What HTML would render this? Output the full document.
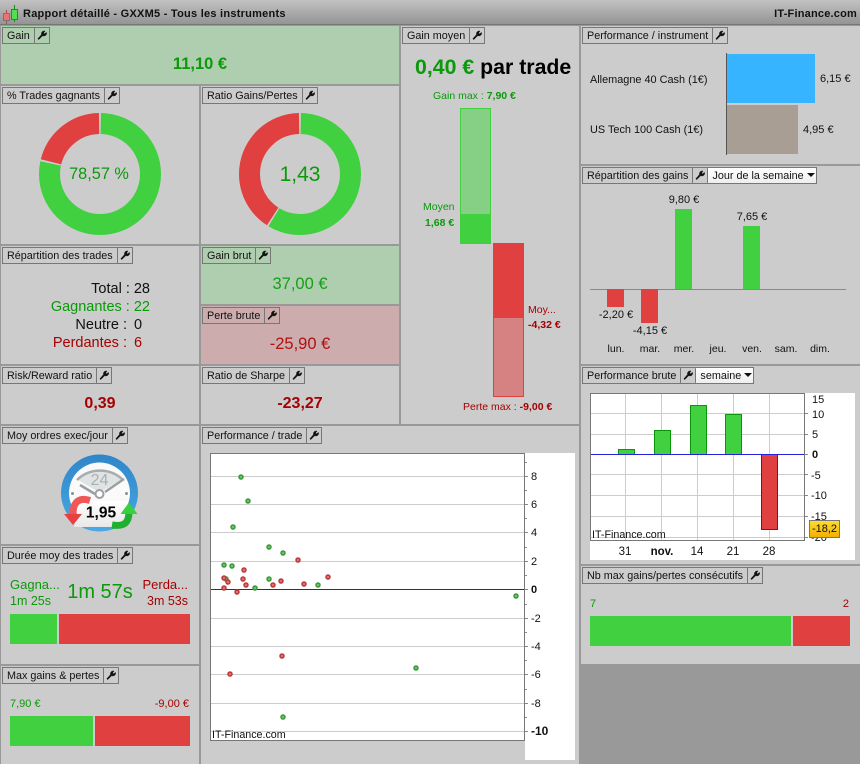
<!DOCTYPE html>
<html lang="fr"><head><meta charset="utf-8"><title>Rapport détaillé</title>
<style>
html,body{margin:0;padding:0}
body{width:860px;height:764px;position:relative;overflow:hidden;background:#999;font-family:"Liberation Sans",Arial,sans-serif;font-size:12px;color:#111}
.p{position:absolute;background:#ccc}
.g{background:#afcdaf}
.r{background:#ccacac}
.a{position:absolute;white-space:nowrap}
.c{text-align:center}
.l{position:absolute;left:1px;top:1px;height:15px;border:1px solid #777;line-height:17px;white-space:nowrap;display:flex;font-size:10.800px}
.l b{font-weight:normal;padding:0 4px 0 4px;border-right:1px solid #777;display:block}
.l i{display:block;width:14px;height:15px;position:relative}
.l i svg{position:absolute;left:2px;top:2px}
.l u{text-decoration:none;display:block;background:linear-gradient(#fff,#eee);padding:0 1px 0 4px;border-left:1px solid #777;border-radius:1px}
.tri{display:inline-block;width:0;height:0;border:4px solid transparent;border-top-color:#111;border-bottom:0;margin-left:3px;vertical-align:2px}
.gt{color:#0a9a0a}.rt{color:#a60000}
svg{display:block}
</style></head><body>
<svg width="0" height="0" style="position:absolute"><defs><path id="w" d="M1 10.500 2 11.500 6.800 6.800C8.600 7.600 10.600 6.800 11.300 5.200 11.600 4.400 11.600 3.600 11.300 2.900L9.300 4.700 7.800 3.600 9.600 1.300C8.400 .9 6.800 1.300 6 2.400 5.300 3.300 5.200 4.500 5.500 5.400Z" fill="#111" stroke="#111" stroke-width=".6"/></defs></svg>

<!-- title bar -->
<div class="a" style="left:0;top:0;width:860px;height:24px;background:linear-gradient(#c2c2c2,#949494);border-bottom:1px solid #777"></div>
<svg class="a" style="left:2px;top:4px" width="18" height="20"><path d="M4.500 6v14" stroke="#a05050" stroke-width="1"/><path d="M12.500 1v17" stroke="#1a8a1a" stroke-width="1"/><rect x="1.500" y="9.500" width="6" height="7" fill="#f07070" stroke="#777"/><rect x="9.500" y="5.500" width="6" height="10" fill="#50e050" stroke="#2a8a2a"/></svg>
<div class="a" style="left:23px;top:7px;font-weight:bold;font-size:11px;letter-spacing:.25px;line-height:14px;color:#111">Rapport détaillé - GXXM5 - Tous les instruments</div>
<div class="a" style="right:3px;top:7px;font-weight:bold;font-size:11px;letter-spacing:.2px;line-height:14px;color:#111">IT-Finance.com</div>

<!-- Gain -->
<div class="p g" style="left:1px;top:26px;width:398px;height:58px"><div class="l"><b>Gain</b><i><svg width="10" height="10" viewBox="0 0 12 12"><use href="#w"/></svg></i></div></div>
<div class="a c gt" style="left:1px;top:54px;width:398px;font-size:16.500px;font-weight:bold;line-height:20px">11,10 €</div>

<!-- % trades -->
<div class="p" style="left:1px;top:86px;width:198px;height:158px"><div class="l"><b>% Trades gagnants</b><i><svg width="10" height="10" viewBox="0 0 12 12"><use href="#w"/></svg></i></div></div>
<svg class="a" style="left:39px;top:113px" width="122" height="122"><g transform="rotate(-90 61 61)" fill="none" stroke-width="21"><circle cx="61" cy="61" r="50.500" stroke="#40d040" pathLength="100" stroke-dasharray="78.100 21.900" stroke-dashoffset="-0.250"/><circle cx="61" cy="61" r="50.500" stroke="#e04040" pathLength="100" stroke-dasharray="20.800 79.200" stroke-dashoffset="-78.900"/></g></svg>
<div class="a c gt" style="left:38px;top:164px;width:122px;font-size:16.300px;line-height:20px">78,57 %</div>

<!-- ratio -->
<div class="p" style="left:201px;top:86px;width:198px;height:158px"><div class="l"><b>Ratio Gains/Pertes</b><i><svg width="10" height="10" viewBox="0 0 12 12"><use href="#w"/></svg></i></div></div>
<svg class="a" style="left:239px;top:113px" width="122" height="122"><g transform="rotate(-90 61 61)" fill="none" stroke-width="21"><circle cx="61" cy="61" r="50.500" stroke="#40d040" pathLength="100" stroke-dasharray="58.400 41.600" stroke-dashoffset="-0.250"/><circle cx="61" cy="61" r="50.500" stroke="#e04040" pathLength="100" stroke-dasharray="40.600 59.400" stroke-dashoffset="-59.100"/></g></svg>
<div class="a c gt" style="left:239px;top:162px;width:122px;font-size:21px;line-height:26px">1,43</div>

<!-- Gain moyen -->
<div class="p" style="left:401px;top:26px;width:178px;height:398px"><div class="l"><b>Gain moyen</b><i><svg width="10" height="10" viewBox="0 0 12 12"><use href="#w"/></svg></i></div></div>
<div class="a" style="left:415px;top:53px;font-size:21.300px;font-weight:bold;line-height:28px"><span class="gt">0,40 €</span> <span style="color:#000">par trade</span></div>
<div class="a gt" style="left:433px;top:89px;font-size:10.500px;line-height:14px">Gain max : <b>7,90 €</b></div>
<div class="a" style="left:460px;top:108px;width:31px;height:106px;box-sizing:border-box;background:#85d085;border:1px solid #40d040;border-bottom:0"></div>
<div class="a" style="left:460px;top:214px;width:31px;height:30px;background:#40d040"></div>
<div class="a" style="left:493px;top:243px;width:31px;height:75px;background:#e04040"></div>
<div class="a" style="left:493px;top:318px;width:31px;height:79px;box-sizing:border-box;background:#d68282;border:1px solid #e04040;border-top:0"></div>
<div class="a gt" style="left:423px;top:200px;font-size:10.500px;line-height:14px">Moyen</div>
<div class="a gt" style="left:425px;top:216px;font-size:10.500px;font-weight:bold;line-height:14px">1,68 €</div>
<div class="a rt" style="left:528px;top:303px;font-size:10.500px;line-height:14px">Moy...</div>
<div class="a rt" style="left:528px;top:318px;font-size:10.500px;font-weight:bold;line-height:14px">-4,32 €</div>
<div class="a rt" style="left:463px;top:400px;font-size:10.500px;line-height:14px">Perte max : <b>-9,00 €</b></div>

<!-- Perf / instrument -->
<div class="p" style="left:581px;top:26px;width:279px;height:138px"><div class="l"><b>Performance / instrument</b><i><svg width="10" height="10" viewBox="0 0 12 12"><use href="#w"/></svg></i></div></div>
<div class="a" style="left:590px;top:73px;font-size:10.900px;line-height:14px">Allemagne 40 Cash (1€)</div>
<div class="a" style="left:590px;top:123px;font-size:10.900px;line-height:14px">US Tech 100 Cash (1€)</div>
<div class="a" style="left:726px;top:53px;width:1px;height:102px;background:#555"></div>
<div class="a" style="left:727px;top:54px;width:88px;height:49px;background:#36b4ff"></div>
<div class="a" style="left:727px;top:105px;width:71px;height:49px;background:#a89e94"></div>
<div class="a" style="left:820px;top:72px;font-size:11px;line-height:14px">6,15 €</div>
<div class="a" style="left:803px;top:123px;font-size:11px;line-height:14px">4,95 €</div>

<!-- Repartition gains -->
<div class="p" style="left:581px;top:166px;width:279px;height:198px"><div class="l"><b>Répartition des gains</b><i><svg width="10" height="10" viewBox="0 0 12 12"><use href="#w"/></svg></i><u>Jour de la semaine<span class="tri"></span></u></div></div>
<div class="a" style="left:590px;top:289px;width:256px;height:1px;background:#888"></div>
<div class="a" style="left:607px;top:289px;width:17px;height:18px;background:#e04040"></div>
<div class="a" style="left:641px;top:289px;width:17px;height:34px;background:#e04040"></div>
<div class="a" style="left:675px;top:209px;width:17px;height:80px;background:#40d040"></div>
<div class="a" style="left:743px;top:226px;width:17px;height:63px;background:#40d040"></div>
<div class="a c" style="left:584px;top:308px;width:64px;font-size:11px;line-height:14px">-2,20 €</div>
<div class="a c" style="left:618px;top:324px;width:64px;font-size:11px;line-height:14px">-4,15 €</div>
<div class="a c" style="left:652px;top:193px;width:64px;font-size:11px;line-height:14px">9,80 €</div>
<div class="a c" style="left:720px;top:210px;width:64px;font-size:11px;line-height:14px">7,65 €</div>
<div class="a c" style="left:586px;top:342px;width:60px;font-size:10.500px;line-height:14px">lun.</div>
<div class="a c" style="left:620px;top:342px;width:60px;font-size:10.500px;line-height:14px">mar.</div>
<div class="a c" style="left:654px;top:342px;width:60px;font-size:10.500px;line-height:14px">mer.</div>
<div class="a c" style="left:688px;top:342px;width:60px;font-size:10.500px;line-height:14px">jeu.</div>
<div class="a c" style="left:722px;top:342px;width:60px;font-size:10.500px;line-height:14px">ven.</div>
<div class="a c" style="left:756px;top:342px;width:60px;font-size:10.500px;line-height:14px">sam.</div>
<div class="a c" style="left:790px;top:342px;width:60px;font-size:10.500px;line-height:14px">dim.</div>

<!-- Repartition trades -->
<div class="p" style="left:1px;top:246px;width:198px;height:118px"><div class="l"><b>Répartition des trades</b><i><svg width="10" height="10" viewBox="0 0 12 12"><use href="#w"/></svg></i></div></div>
<div class="a" style="right:710px;top:280px;font-size:14.500px;line-height:18px;text-align:right;color:#111">Total : 28<br><span class="gt">Gagnantes : 22</span></div>
<div class="a" style="left:0;top:316px;width:127px;text-align:right;font-size:14.500px;line-height:18px;color:#111">Neutre :<br><span class="rt">Perdantes :</span></div>
<div class="a" style="left:134px;top:316px;font-size:14.500px;line-height:18px;color:#111">0<br><span class="rt">6</span></div>

<!-- Gain brut / Perte brute -->
<div class="p g" style="left:201px;top:246px;width:198px;height:58px"><div class="l"><b>Gain brut</b><i><svg width="10" height="10" viewBox="0 0 12 12"><use href="#w"/></svg></i></div></div>
<div class="a c" style="left:201px;top:274px;width:198px;font-size:16.500px;line-height:20px;color:#14a014">37,00 €</div>
<div class="p r" style="left:201px;top:306px;width:198px;height:58px"><div class="l"><b>Perte brute</b><i><svg width="10" height="10" viewBox="0 0 12 12"><use href="#w"/></svg></i></div></div>
<div class="a c" style="left:201px;top:334px;width:198px;font-size:16.500px;line-height:20px;color:#b01010">-25,90 €</div>

<!-- Risk / Sharpe -->
<div class="p" style="left:1px;top:366px;width:198px;height:58px"><div class="l"><b>Risk/Reward ratio</b><i><svg width="10" height="10" viewBox="0 0 12 12"><use href="#w"/></svg></i></div></div>
<div class="a c rt" style="left:1px;top:394px;width:198px;font-size:16px;font-weight:bold;line-height:20px">0,39</div>
<div class="p" style="left:201px;top:366px;width:198px;height:58px"><div class="l"><b>Ratio de Sharpe</b><i><svg width="10" height="10" viewBox="0 0 12 12"><use href="#w"/></svg></i></div></div>
<div class="a c rt" style="left:201px;top:394px;width:198px;font-size:16px;font-weight:bold;line-height:20px">-23,27</div>

<!-- Moy ordres -->
<div class="p" style="left:1px;top:426px;width:198px;height:118px"><div class="l"><b>Moy ordres exec/jour</b><i><svg width="10" height="10" viewBox="0 0 12 12"><use href="#w"/></svg></i></div></div>
<svg class="a" style="left:55px;top:450px" width="90" height="90" viewBox="0 0 90 90">
<defs><linearGradient id="bl" x1="0" y1="0" x2="0" y2="1"><stop offset="0" stop-color="#2f86c8"/><stop offset="1" stop-color="#4aa8e4"/></linearGradient>
<linearGradient id="yl" x1="0" y1="0" x2="0" y2="1"><stop offset="0" stop-color="#fff"/><stop offset="1" stop-color="#e8e8e8"/></linearGradient></defs>
<circle cx="44.500" cy="43" r="38.500" fill="url(#bl)"/><circle cx="44.500" cy="43" r="30.500" fill="#fafafa"/>
<path d="M23 30A31 31 0 0 1 66 30L47 41H42Z" fill="#dfe3e3"/>
<path d="M22 30A33 33 0 0 1 68 30" fill="none" stroke="#a8acac" stroke-width="2.500"/>
<path d="M25 35 40 44M69 29 50 42" stroke="#9aa0a0" stroke-width="2.500"/>
<circle cx="44.500" cy="44" r="4" fill="#fff" stroke="#9aa0a0" stroke-width="2"/>
<circle cx="17.500" cy="43.500" r="1.500" fill="#8a9090"/><circle cx="71.500" cy="43.500" r="1.500" fill="#8a9090"/>
<text x="44.500" y="35" text-anchor="middle" font-family="Liberation Sans" font-size="16" fill="#a8b0b0">24</text>
<path d="M25 51H73L68 77H19Z" fill="url(#yl)"/>
<path d="M35 50.500C24 47 18 52 18 64" fill="none" stroke="#f05858" stroke-width="7"/>
<path d="M9 64 18 75 27 64Z" fill="#e84040"/>
<path d="M57 75C70 77 74 72 74 62" fill="none" stroke="#20b030" stroke-width="7"/>
<path d="M65.500 64 74 52.500 82.500 64Z" fill="#38d040"/>
<text x="46" y="67.500" text-anchor="middle" font-family="Liberation Sans" font-size="15.500" font-weight="bold" fill="#000">1,95</text>
</svg>

<!-- Duree -->
<div class="p" style="left:1px;top:546px;width:198px;height:118px"><div class="l"><b>Durée moy des trades</b><i><svg width="10" height="10" viewBox="0 0 12 12"><use href="#w"/></svg></i></div></div>
<div class="a gt" style="left:10px;top:577px;font-size:13px;line-height:16px">Gagna...</div>
<div class="a gt" style="left:10px;top:593px;font-size:12.500px;line-height:16px">1m 25s</div>
<div class="a c gt" style="left:50px;top:580px;width:100px;font-size:20px;line-height:24px">1m 57s</div>
<div class="a rt" style="right:672px;top:577px;font-size:13px;line-height:16px">Perda...</div>
<div class="a rt" style="right:672px;top:593px;font-size:12.500px;line-height:16px">3m 53s</div>
<div class="a" style="left:10px;top:614px;width:47px;height:30px;background:#40d040"></div>
<div class="a" style="left:59px;top:614px;width:131px;height:30px;background:#e04040"></div>

<!-- Max -->
<div class="p" style="left:1px;top:666px;width:198px;height:98px"><div class="l"><b>Max gains &amp; pertes</b><i><svg width="10" height="10" viewBox="0 0 12 12"><use href="#w"/></svg></i></div></div>
<div class="a gt" style="left:10px;top:697px;font-size:11px;line-height:14px">7,90 €</div>
<div class="a rt" style="right:671px;top:697px;font-size:11px;line-height:14px">-9,00 €</div>
<div class="a" style="left:10px;top:716px;width:83px;height:30px;background:#40d040"></div>
<div class="a" style="left:95px;top:716px;width:95px;height:30px;background:#e04040"></div>

<!-- Perf / trade -->
<div class="p" style="left:201px;top:426px;width:378px;height:338px"><div class="l"><b>Performance / trade</b><i><svg width="10" height="10" viewBox="0 0 12 12"><use href="#w"/></svg></i></div></div>
<svg class="a" style="left:210px;top:453px" width="365" height="308">
<rect width="315" height="288" x="0" y="0" fill="#fff"/>
<rect x="315" y="0" width="50" height="307" fill="#fff"/>
<g stroke="#ccc" stroke-width="1"><path d="M1 23.500H314M1 51.500H314M1 79.500H314M1 108.500H314M1 165.500H314M1 193.500H314M1 221.500H314M1 250.500H314M1 278.500H314"/></g>
<path d="M1 136.500H314" stroke="#2222bb"/>
<rect x=".5" y=".5" width="314" height="287" fill="none" stroke="#777"/>
<path d="M315 23.500h3M315 51.500h3M315 79.500h3M315 108.500h3M315 136.500h3M315 165.500h3M315 193.500h3M315 221.500h3M315 250.500h3M315 278.500h3M315 9.500h2M315 37.500h2M315 65.500h2M315 94.500h2M315 122.500h2M315 151.500h2M315 179.500h2M315 207.500h2M315 236.500h2M315 264.500h2" stroke="#888"/>
<g font-family="Liberation Sans" font-size="11" fill="#111">
<text x="321" y="27">8</text><text x="321" y="55">6</text><text x="321" y="83">4</text><text x="321" y="112">2</text><text x="321" y="140" font-weight="bold">0</text><text x="321" y="169">-2</text><text x="321" y="197">-4</text><text x="321" y="225">-6</text><text x="321" y="254">-8</text><text x="321" y="282" font-weight="bold" font-size="12">-10</text>
</g>
<text x="2" y="285" font-family="Liberation Sans" font-size="10.700" fill="#111">IT-Finance.com</text>
<g fill="#70c070" stroke="#3a9a3a" stroke-width="1.500">
<circle cx="31" cy="24" r="2"/><circle cx="38" cy="48" r="2"/><circle cx="23" cy="74" r="2"/><circle cx="59" cy="94" r="2"/><circle cx="73" cy="100" r="2"/><circle cx="14" cy="112" r="2"/><circle cx="22" cy="113" r="2"/><circle cx="16" cy="126" r="2"/><circle cx="59" cy="126" r="2"/><circle cx="45" cy="135" r="2"/><circle cx="108" cy="132" r="2"/><circle cx="306" cy="143" r="2"/><circle cx="206" cy="215" r="2"/><circle cx="73" cy="264" r="2"/>
</g>
<g fill="#e07070" stroke="#bb3a3a" stroke-width="1.500">
<circle cx="88" cy="107" r="2"/><circle cx="34" cy="117" r="2"/><circle cx="14" cy="125" r="2"/><circle cx="18" cy="129" r="2"/><circle cx="33" cy="126" r="2"/><circle cx="36" cy="132" r="2"/><circle cx="14" cy="135" r="2"/><circle cx="27" cy="139" r="2"/><circle cx="63" cy="132" r="2"/><circle cx="71" cy="128" r="2"/><circle cx="94" cy="131" r="2"/><circle cx="118" cy="124" r="2"/><circle cx="72" cy="203" r="2"/><circle cx="20" cy="221" r="2"/>
</g>
</svg>

<!-- Perf brute -->
<div class="p" style="left:581px;top:366px;width:279px;height:198px"><div class="l"><b>Performance brute</b><i><svg width="10" height="10" viewBox="0 0 12 12"><use href="#w"/></svg></i><u>semaine<span class="tri"></span></u></div></div>
<svg class="a" style="left:590px;top:393px" width="265" height="167">
<rect width="265" height="167" fill="#fff"/>
<path d="M1 20.500H214M1 41.500H214M1 81.500H214M1 102.500H214M1 123.500H214M1 144.500H214M35.500 1V148M71.500 1V148M107.500 1V148M143.500 1V148M179.500 1V148" stroke="#ccc"/>
<g stroke-width="1"><rect x="28.500" y="56.500" width="16" height="5" fill="#40d040" stroke="#0a960a"/><rect x="64.500" y="37.500" width="16" height="24" fill="#40d040" stroke="#0a960a"/><rect x="100.500" y="12.500" width="16" height="49" fill="#40d040" stroke="#0a960a"/><rect x="135.500" y="21.500" width="16" height="40" fill="#40d040" stroke="#0a960a"/><rect x="171.500" y="61.500" width="16" height="75" fill="#e04040" stroke="#9a0a0a"/></g>
<path d="M1 61.500H215" stroke="#2222dd"/>
<rect x=".5" y=".5" width="214" height="147" fill="none" stroke="#777"/>
<path d="M215 20.500h3M215 41.500h3M215 61.500h3M215 81.500h3M215 102.500h3M215 123.500h3M215 144.500h3" stroke="#888"/>
<g font-family="Liberation Sans" font-size="11" fill="#111">
<text x="222" y="10">15</text><text x="222" y="25">10</text><text x="222" y="45">5</text><text x="222" y="65" font-weight="bold">0</text><text x="221" y="86">-5</text><text x="221" y="106">-10</text><text x="221" y="127">-15</text><text x="221" y="148">-20</text>
<text x="2" y="145" font-size="10.700">IT-Finance.com</text>
<text x="35" y="162" text-anchor="middle" font-size="11.500">31</text><text x="72" y="162" text-anchor="middle" font-weight="bold" font-size="11.500">nov.</text><text x="107" y="162" text-anchor="middle" font-size="11.500">14</text><text x="143" y="162" text-anchor="middle" font-size="11.500">21</text><text x="179" y="162" text-anchor="middle" font-size="11.500">28</text>
</g>
</svg>
<div class="a c" style="left:809px;top:520px;width:29px;height:16px;border:1px solid #777;background:linear-gradient(#ffdc30,#f0b000);font-size:11px;line-height:16px;color:#111">-18,2</div>

<!-- Nb max -->
<div class="p" style="left:581px;top:566px;width:279px;height:98px"><div class="l"><b>Nb max gains/pertes consécutifs</b><i><svg width="10" height="10" viewBox="0 0 12 12"><use href="#w"/></svg></i></div></div>
<div class="a gt" style="left:590px;top:597px;font-size:11px;line-height:14px">7</div>
<div class="a rt" style="right:11px;top:597px;font-size:11px;line-height:14px">2</div>
<div class="a" style="left:590px;top:616px;width:201px;height:30px;background:#40d040"></div>
<div class="a" style="left:793px;top:616px;width:57px;height:30px;background:#e04040"></div>
</body></html>
